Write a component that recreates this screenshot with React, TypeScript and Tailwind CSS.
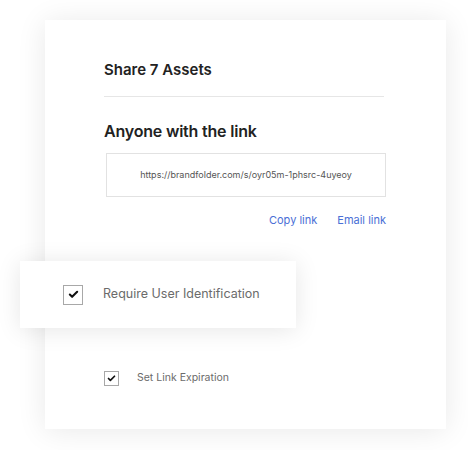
import { Check } from "lucide-react"

function Box({ size }: { size: "lg" | "sm" }) {
  const dims = size === "lg" ? "w-5 h-5" : "w-[15px] h-[15px]"
  return (
    <span className={`${dims} flex items-center justify-center border border-[#a8a8a8] bg-white shrink-0`}>
      <Check className={size === "lg" ? "w-[11px] h-[11px]" : "w-[9px] h-[9px]"} strokeWidth={4.5} color="#111" />
    </span>
  )
}

export default function App() {
  return (
    <div className="w-[468px] h-[450px] bg-white pt-5 pl-[45px] font-['Inter',sans-serif]">
      <div className="w-[401px] h-[409px] bg-white shadow-[0_2px_28px_rgba(0,0,0,0.09)] pt-10 pl-[59px] pr-[60px]">
        <h1 className="text-[15px] leading-5 font-semibold text-[#222]">Share 7 Assets</h1>
        <div className="mt-4 mr-[2px] h-px bg-[#e6e6e6]" />

        <h2 className="mt-[23px] text-[16px] leading-[22px] font-semibold text-[#222] tracking-[-0.2px]">Anyone with the link</h2>
        <div className="mt-[11px] ml-[2px] w-[280px] h-[44px] border border-[#e2e2e2] flex items-center justify-center text-[9px] text-[#555]">
          https://brandfolder.com/s/oyr05m-1phsrc-4uyeoy
        </div>
        <div className="mt-[15px] flex justify-end gap-5 text-[11px] leading-4 text-[#4a6fd6]">
          <span>Copy link</span>
          <span>Email link</span>
        </div>

        {/* zoomed-in option that floats over the card */}
        <div className="mt-[33px] -ml-[84px] w-[276px] h-[67px] bg-white shadow-[0_2px_24px_rgba(0,0,0,0.1)] flex items-center pl-[43px] gap-5">
          <Box size="lg" />
          <span className="text-[12.5px] text-[#6b6b6b]">Require User Identification</span>
        </div>

        <div className="mt-[42px] flex items-center gap-[18px]">
          <Box size="sm" />
          <span className="text-[10.5px] leading-4 text-[#6b6b6b]">Set Link Expiration</span>
        </div>
      </div>
    </div>
  )
}
